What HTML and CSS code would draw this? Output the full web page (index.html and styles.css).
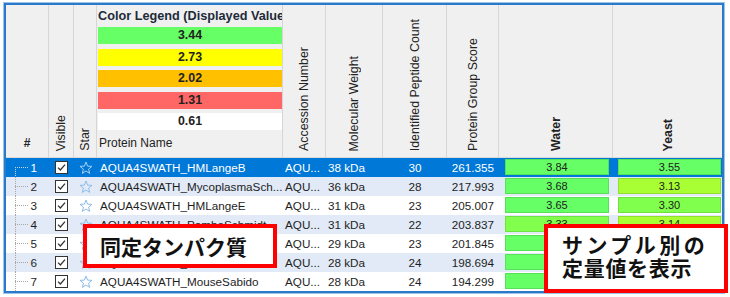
FILE: index.html
```html
<!DOCTYPE html>
<html lang="ja">
<head>
<meta charset="utf-8">
<title>Protein table</title>
<link rel="stylesheet" href="styles.css">
</head>
<body>
<div class="page">
  <div class="frame">
    <div class="head">
      <div class="hc"><span class="hash">#</span></div>
      <div class="hc"><span class="vt">Visible</span></div>
      <div class="hc"><span class="vt">Star</span></div>
      <div class="hc c-name-h">
        <div class="legend-title">Color Legend (Displayed Values)</div>
        <div class="swatches">
          <div class="sw sw-green">3.44</div>
          <div class="sw sw-yellow">2.73</div>
          <div class="sw sw-orange">2.02</div>
          <div class="sw sw-red">1.31</div>
          <div class="sw sw-white">0.61</div>
        </div>
        <div class="name-label">Protein Name</div>
      </div>
      <div class="hc"><span class="vt">Accession Number</span></div>
      <div class="hc"><span class="vt">Molecular Weight</span></div>
      <div class="hc"><span class="vt">Identified Peptide Count</span></div>
      <div class="hc"><span class="vt">Protein Group Score</span></div>
      <div class="hc"><span class="vt bold">Water</span></div>
      <div class="hc"><span class="vt bold">Yeast</span></div>
    </div>

    <div class="row sel">
      <div class="c-num"><span class="tree first"></span><span class="num">1</span></div>
      <div class="c-vis"><svg class="chk" width="13" height="13" viewBox="0 0 13 13"><rect x="0.5" y="0.5" width="12" height="12" fill="#fff" stroke="#333"/><path d="M3 6.6 L5.4 9 L10 3.6" fill="none" stroke="#333" stroke-width="1.3"/></svg></div>
      <div class="c-star"><svg class="star" width="14" height="14" viewBox="0 0 14 14"><polygon points="7,1 8.59,5.12 12.99,5.35 9.57,8.13 10.7,12.4 7,10 3.3,12.4 4.43,8.13 1.01,5.35 5.41,5.12"/></svg></div>
      <div class="c-name">AQUA4SWATH_HMLangeB</div>
      <div class="c-acc">AQU...</div>
      <div class="c-mw">38 kDa</div>
      <div class="c-pep">30</div>
      <div class="c-score">261.355</div>
      <div class="c-water"><div class="bar g1">3.84</div></div>
      <div class="c-yeast"><div class="bar g1">3.55</div></div>
    </div>

    <div class="row alt">
      <div class="c-num"><span class="tree"></span><span class="num">2</span></div>
      <div class="c-vis"><svg class="chk" width="13" height="13" viewBox="0 0 13 13"><rect x="0.5" y="0.5" width="12" height="12" fill="#fff" stroke="#333"/><path d="M3 6.6 L5.4 9 L10 3.6" fill="none" stroke="#333" stroke-width="1.3"/></svg></div>
      <div class="c-star"><svg class="star" width="14" height="14" viewBox="0 0 14 14"><polygon points="7,1 8.59,5.12 12.99,5.35 9.57,8.13 10.7,12.4 7,10 3.3,12.4 4.43,8.13 1.01,5.35 5.41,5.12"/></svg></div>
      <div class="c-name">AQUA4SWATH_MycoplasmaSch...</div>
      <div class="c-acc">AQU...</div>
      <div class="c-mw">36 kDa</div>
      <div class="c-pep">28</div>
      <div class="c-score">217.993</div>
      <div class="c-water"><div class="bar g1">3.68</div></div>
      <div class="c-yeast"><div class="bar g3">3.13</div></div>
    </div>

    <div class="row">
      <div class="c-num"><span class="tree"></span><span class="num">3</span></div>
      <div class="c-vis"><svg class="chk" width="13" height="13" viewBox="0 0 13 13"><rect x="0.5" y="0.5" width="12" height="12" fill="#fff" stroke="#333"/><path d="M3 6.6 L5.4 9 L10 3.6" fill="none" stroke="#333" stroke-width="1.3"/></svg></div>
      <div class="c-star"><svg class="star" width="14" height="14" viewBox="0 0 14 14"><polygon points="7,1 8.59,5.12 12.99,5.35 9.57,8.13 10.7,12.4 7,10 3.3,12.4 4.43,8.13 1.01,5.35 5.41,5.12"/></svg></div>
      <div class="c-name">AQUA4SWATH_HMLangeE</div>
      <div class="c-acc">AQU...</div>
      <div class="c-mw">31 kDa</div>
      <div class="c-pep">23</div>
      <div class="c-score">205.007</div>
      <div class="c-water"><div class="bar g1">3.65</div></div>
      <div class="c-yeast"><div class="bar g2">3.30</div></div>
    </div>

    <div class="row alt">
      <div class="c-num"><span class="tree"></span><span class="num">4</span></div>
      <div class="c-vis"><svg class="chk" width="13" height="13" viewBox="0 0 13 13"><rect x="0.5" y="0.5" width="12" height="12" fill="#fff" stroke="#333"/><path d="M3 6.6 L5.4 9 L10 3.6" fill="none" stroke="#333" stroke-width="1.3"/></svg></div>
      <div class="c-star"><svg class="star" width="14" height="14" viewBox="0 0 14 14"><polygon points="7,1 8.59,5.12 12.99,5.35 9.57,8.13 10.7,12.4 7,10 3.3,12.4 4.43,8.13 1.01,5.35 5.41,5.12"/></svg></div>
      <div class="c-name">AQUA4SWATH_PombeSchmidt</div>
      <div class="c-acc">AQU...</div>
      <div class="c-mw">31 kDa</div>
      <div class="c-pep">22</div>
      <div class="c-score">203.837</div>
      <div class="c-water"><div class="bar g2">3.33</div></div>
      <div class="c-yeast"><div class="bar g3">3.14</div></div>
    </div>

    <div class="row">
      <div class="c-num"><span class="tree"></span><span class="num">5</span></div>
      <div class="c-vis"><svg class="chk" width="13" height="13" viewBox="0 0 13 13"><rect x="0.5" y="0.5" width="12" height="12" fill="#fff" stroke="#333"/><path d="M3 6.6 L5.4 9 L10 3.6" fill="none" stroke="#333" stroke-width="1.3"/></svg></div>
      <div class="c-star"><svg class="star" width="14" height="14" viewBox="0 0 14 14"><polygon points="7,1 8.59,5.12 12.99,5.35 9.57,8.13 10.7,12.4 7,10 3.3,12.4 4.43,8.13 1.01,5.35 5.41,5.12"/></svg></div>
      <div class="c-name">AQUA4SWATH_HMLangeA</div>
      <div class="c-acc">AQU...</div>
      <div class="c-mw">29 kDa</div>
      <div class="c-pep">23</div>
      <div class="c-score">201.845</div>
      <div class="c-water"><div class="bar g1">3.62</div></div>
      <div class="c-yeast"><div class="bar g2">3.28</div></div>
    </div>

    <div class="row alt">
      <div class="c-num"><span class="tree"></span><span class="num">6</span></div>
      <div class="c-vis"><svg class="chk" width="13" height="13" viewBox="0 0 13 13"><rect x="0.5" y="0.5" width="12" height="12" fill="#fff" stroke="#333"/><path d="M3 6.6 L5.4 9 L10 3.6" fill="none" stroke="#333" stroke-width="1.3"/></svg></div>
      <div class="c-star"><svg class="star" width="14" height="14" viewBox="0 0 14 14"><polygon points="7,1 8.59,5.12 12.99,5.35 9.57,8.13 10.7,12.4 7,10 3.3,12.4 4.43,8.13 1.01,5.35 5.41,5.12"/></svg></div>
      <div class="c-name">AQUA4SWATH_Yeast</div>
      <div class="c-acc">AQU...</div>
      <div class="c-mw">28 kDa</div>
      <div class="c-pep">24</div>
      <div class="c-score">198.694</div>
      <div class="c-water"><div class="bar g1">3.60</div></div>
      <div class="c-yeast"><div class="bar g2">3.25</div></div>
    </div>

    <div class="row">
      <div class="c-num"><span class="tree"></span><span class="num">7</span></div>
      <div class="c-vis"><svg class="chk" width="13" height="13" viewBox="0 0 13 13"><rect x="0.5" y="0.5" width="12" height="12" fill="#fff" stroke="#333"/><path d="M3 6.6 L5.4 9 L10 3.6" fill="none" stroke="#333" stroke-width="1.3"/></svg></div>
      <div class="c-star"><svg class="star" width="14" height="14" viewBox="0 0 14 14"><polygon points="7,1 8.59,5.12 12.99,5.35 9.57,8.13 10.7,12.4 7,10 3.3,12.4 4.43,8.13 1.01,5.35 5.41,5.12"/></svg></div>
      <div class="c-name">AQUA4SWATH_MouseSabido</div>
      <div class="c-acc">AQU...</div>
      <div class="c-mw">28 kDa</div>
      <div class="c-pep">24</div>
      <div class="c-score">194.299</div>
      <div class="c-water"><div class="bar g1">3.58</div></div>
      <div class="c-yeast"><div class="bar g2">3.27</div></div>
    </div>
  </div>

  <div class="callout callout-a">同定タンパク質</div>
  <div class="callout callout-b"><span class="l1">サンプル別の</span><br><span class="l2">定量値を表示</span></div>
</div>
</body>
</html>
```

FILE: styles.css
```css
html, body {
  margin: 0;
  padding: 0;
  background: #ffffff;
}

.page {
  position: relative;
  width: 730px;
  height: 297px;
  overflow: hidden;
  font-family: "Liberation Sans", Arial, sans-serif;
  color: #1e1e1e;
}

.frame {
  margin: 3px 0 0 4px;
  width: 716px;
  border: 2px solid #2b79c9;
  box-shadow: 0 0 0 1px #9cc4ea;
  background: #ffffff;
}

.head,
.row {
  display: grid;
  grid-template-columns: 43px 25px 23px 186px 43px 57px 64px 52px 114px 109px;
}

/* ---------- header ---------- */
.head {
  height: 153px;
  background: #f0f0f0;
  border-bottom: 1px solid #d9d9d9;
  box-sizing: border-box;
}

.hc {
  border-right: 1px solid #d6d6d6;
  display: flex;
  align-items: flex-end;
  justify-content: center;
  padding-bottom: 6px;
  box-sizing: border-box;
  overflow: hidden;
}

.hc:last-child {
  border-right: none;
}

.hash {
  font-weight: bold;
  font-size: 12px;
  line-height: 14px;
  margin-bottom: 1px;
  color: #222;
}

.vt {
  writing-mode: vertical-rl;
  transform: rotate(180deg);
  font-size: 12.4px;
  line-height: 14px;
  white-space: nowrap;
  color: #222;
}

.vt.bold {
  font-weight: bold;
}

.c-name-h {
  flex-direction: column;
  align-items: stretch;
  justify-content: flex-start;
  padding: 0 0 6px 1px;
}

.legend-title {
  height: 22px;
  line-height: 22px;
  font-size: 12.7px;
  font-weight: bold;
  white-space: nowrap;
  overflow: hidden;
  color: #1e2a3a;
}

.swatches {
  display: flex;
  flex-direction: column;
  gap: 4.5px;
}

.sw {
  height: 17px;
  line-height: 17px;
  text-align: center;
  font-weight: bold;
  font-size: 12.4px;
  color: #222;
}

.sw-green { background: #66ff66; }
.sw-yellow { background: #ffff00; }
.sw-orange { background: #ffc000; }
.sw-red { background: #ff6666; }
.sw-white { background: #ffffff; }

.name-label {
  margin-top: auto;
  font-size: 12px;
  line-height: 16px;
  padding-left: 1px;
  color: #222;
}

/* ---------- rows ---------- */
.row {
  height: 19px;
  font-size: 11.7px;
  line-height: 19px;
  background: #ffffff;
}

.row.alt {
  background: #e1eaf6;
}

.row.sel {
  background: #0078d7;
  color: #ffffff;
}

.row > div {
  white-space: nowrap;
  overflow: hidden;
}

.c-num {
  display: flex;
  align-items: stretch;
}

.tree {
  display: block;
  width: 14px;
  margin-left: 9px;
  background-image:
    repeating-linear-gradient(to bottom, #a8a8a8 0 1px, transparent 1px 2px),
    repeating-linear-gradient(to right, #a8a8a8 0 1px, transparent 1px 2px);
  background-size: 1px 100%, 14px 1px;
  background-position: left top, left 9px;
  background-repeat: no-repeat;
}

.tree.first {
  background-size: 1px 10px, 14px 1px;
  background-position: left bottom, left 9px;
  background-image:
    repeating-linear-gradient(to bottom, #c8d8ea 0 1px, transparent 1px 2px),
    repeating-linear-gradient(to right, #c8d8ea 0 1px, transparent 1px 2px);
}

.num {
  margin-left: auto;
  padding-right: 12px;
}

.c-vis,
.c-star {
  display: flex;
  align-items: center;
  justify-content: center;
}

.chk {
  display: block;
}

.c-star {
  padding-left: 1px;
}

.star {
  display: block;
}

.star polygon {
  fill: none;
  stroke: #8fbde9;
  stroke-width: 1;
}

.sel .star polygon {
  stroke: #a9d0f5;
}

.c-name {
  padding-left: 3px;
  text-overflow: clip;
}

.c-acc {
  padding-left: 2px;
}

.c-mw {
  padding-left: 2px;
}

.c-pep {
  text-align: center;
}

.c-score {
  text-align: right;
  padding-right: 5px;
}

.c-water {
  padding: 1px 4px 0 6px;
}

.c-yeast {
  padding: 1px 1px 0 5px;
}

.bar {
  height: 16px;
  line-height: 15px;
  box-sizing: border-box;
  border: 1px solid rgba(0, 0, 0, 0.12);
  text-align: center;
  font-size: 11px;
  color: #222;
}

.bar.g1 { background: #66ff66; }
.bar.g2 { background: #80ff4c; }
.bar.g3 { background: #a8ff33; }

/* ---------- callouts ---------- */
.callout {
  position: absolute;
  box-sizing: border-box;
  border: 4px solid #ff0000;
  background: #ffffff;
  font-family: "Noto Sans CJK JP", "Noto Sans CJK SC", sans-serif;
  font-weight: bold;
  font-size: 21px;
  color: #111111;
  white-space: nowrap;
}

.callout-a {
  left: 83px;
  top: 224px;
  width: 194px;
  height: 44px;
  line-height: 36px;
  padding-left: 13px;
}

.callout-b {
  left: 544px;
  top: 224px;
  width: 184px;
  height: 69px;
  line-height: 23px;
  padding: 5px 0 0 14px;
}

.callout-b .l1 {
  letter-spacing: 3.5px;
}

.callout-b .l2 {
  letter-spacing: 0.7px;
}
```
